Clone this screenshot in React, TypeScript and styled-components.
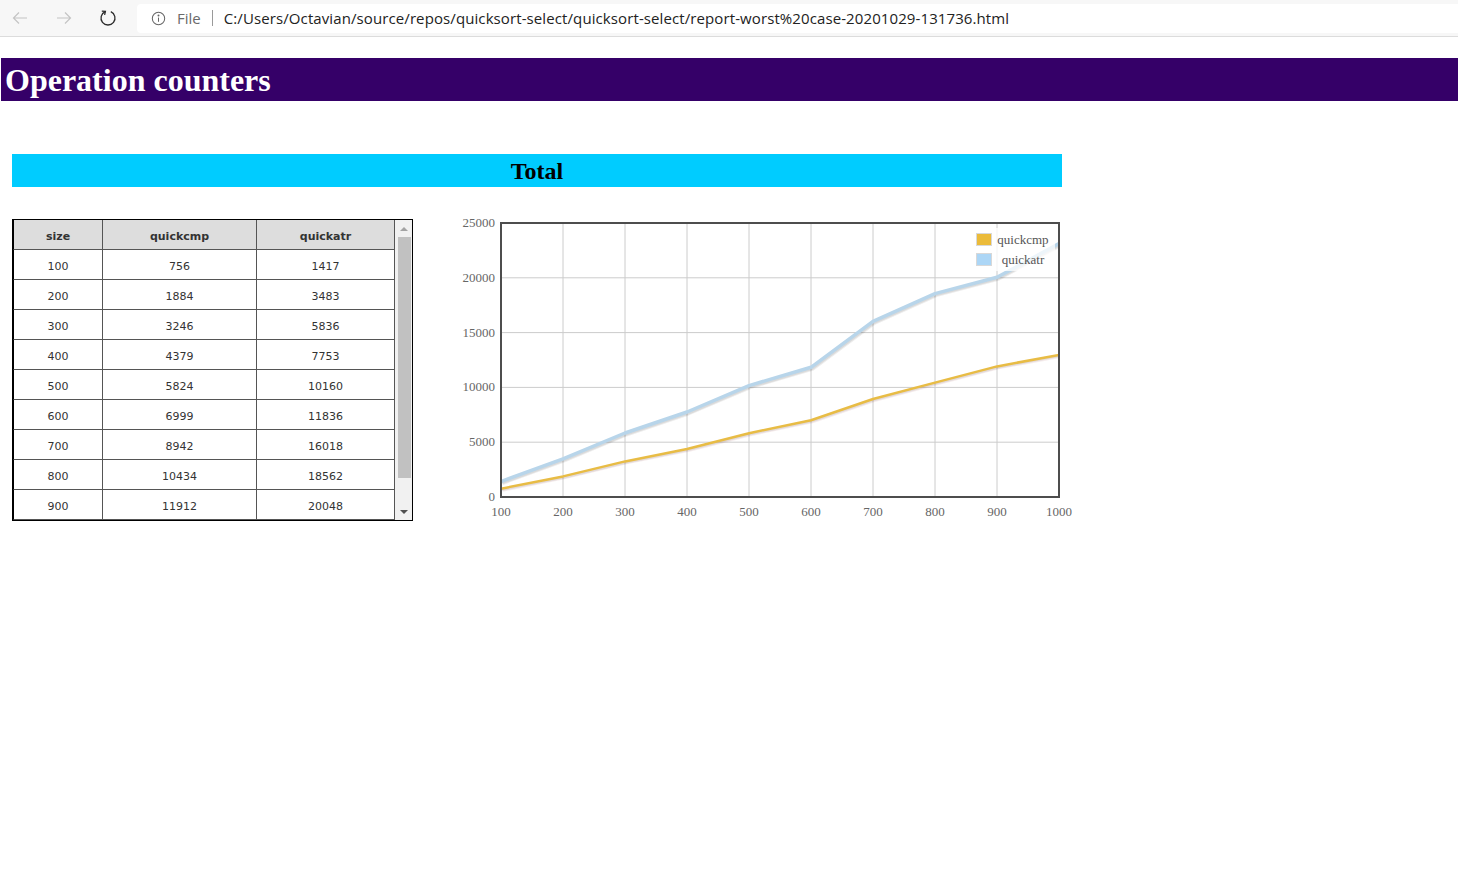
import styled, { createGlobalStyle } from "styled-components";

const GlobalStyle = createGlobalStyle`
    html, body {
        margin: 0;
        padding: 0;
        background: #ffffff;
        font-family: "Liberation Serif", "Times New Roman", serif;
    }
`;

const ROWS = [
    { size: 100, quickcmp: 756, quickatr: 1417 },
    { size: 200, quickcmp: 1884, quickatr: 3483 },
    { size: 300, quickcmp: 3246, quickatr: 5836 },
    { size: 400, quickcmp: 4379, quickatr: 7753 },
    { size: 500, quickcmp: 5824, quickatr: 10160 },
    { size: 600, quickcmp: 6999, quickatr: 11836 },
    { size: 700, quickcmp: 8942, quickatr: 16018 },
    { size: 800, quickcmp: 10434, quickatr: 18562 },
    { size: 900, quickcmp: 11912, quickatr: 20048 },
    { size: 1000, quickcmp: 12968, quickatr: 23121 },
];

// plot area inside the chart svg
const PLOT = { left: 61, right: 619, top: 13, bottom: 287 };
const xPix = (v: number) => PLOT.left + ((v - 100) / 900) * (PLOT.right - PLOT.left);
const yPix = (v: number) => PLOT.bottom - (v / 25000) * (PLOT.bottom - PLOT.top);

function BrowserBar() {
    return (
        <Toolbar>
            <NavButton $dim>
                <svg width="18" height="18" viewBox="0 0 18 18" fill="none" stroke="currentColor" strokeWidth="1.2">
                    <path d="M16 9H2.5M8 3.5L2.5 9L8 14.5" />
                </svg>
            </NavButton>
            <NavButton $dim>
                <svg width="18" height="18" viewBox="0 0 18 18" fill="none" stroke="currentColor" strokeWidth="1.2">
                    <path d="M2 9h13.5M10 3.5L15.5 9L10 14.5" />
                </svg>
            </NavButton>
            <NavButton>
                <svg width="18" height="18" viewBox="0 0 18 18" fill="none" stroke="currentColor" strokeWidth="1.3">
                    <path d="M6.2 2.6A7 7 0 1 0 11.8 2.6" />
                    <path d="M2.8 2.2L6.4 2.4L5.6 5.8" />
                </svg>
            </NavButton>
            <AddressBox>
                <svg width="15" height="15" viewBox="0 0 16 16" fill="none" stroke="#666" strokeWidth="1.1">
                    <circle cx="8" cy="8" r="6.6" />
                    <path d="M8 7v4.5" />
                    <circle cx="8" cy="4.8" r="0.5" fill="#666" />
                </svg>
                <SchemeLabel>File</SchemeLabel>
                <Divider />
                <UrlText>C:/Users/Octavian/source/repos/quicksort-select/quicksort-select/report-worst%20case-20201029-131736.html</UrlText>
            </AddressBox>
        </Toolbar>
    );
}

function CounterTable() {
    return (
        <TableFrame>
            <TableViewport>
                <Grid>
                    <colgroup>
                        <col style={{ width: 90 }} />
                        <col style={{ width: 154 }} />
                        <col style={{ width: 138 }} />
                    </colgroup>
                    <thead>
                        <tr>
                            <HeadCell>size</HeadCell>
                            <HeadCell>quickcmp</HeadCell>
                            <HeadCell>quickatr</HeadCell>
                        </tr>
                    </thead>
                    <tbody>
                        {ROWS.map((r) => (
                            <tr key={r.size}>
                                <Cell>{r.size}</Cell>
                                <Cell>{r.quickcmp}</Cell>
                                <Cell>{r.quickatr}</Cell>
                            </tr>
                        ))}
                    </tbody>
                </Grid>
            </TableViewport>
            <ScrollBar>
                <ScrollArrow $up />
                <ScrollTrack>
                    <ScrollThumb />
                </ScrollTrack>
                <ScrollArrow />
            </ScrollBar>
        </TableFrame>
    );
}

function series(key: "quickcmp" | "quickatr", dx = 0, dy = 0) {
    return ROWS.map((r) => `${(xPix(r.size) + dx).toFixed(1)},${(yPix(r[key]) + dy).toFixed(1)}`).join(" ");
}

function TotalChart() {
    const xTicks = [100, 200, 300, 400, 500, 600, 700, 800, 900, 1000];
    const yTicks = [0, 5000, 10000, 15000, 20000, 25000];

    return (
        <ChartSvg width="640" height="320" viewBox="0 0 640 320">
            <defs>
                <clipPath id="plotClip">
                    <rect x={PLOT.left} y={PLOT.top} width={PLOT.right - PLOT.left} height={PLOT.bottom - PLOT.top} />
                </clipPath>
            </defs>
            {xTicks.map((t) => (
                <line key={"gx" + t} x1={xPix(t)} x2={xPix(t)} y1={PLOT.top} y2={PLOT.bottom} stroke="#cccccc" strokeWidth="1" />
            ))}
            {yTicks.map((t) => (
                <line key={"gy" + t} x1={PLOT.left} x2={PLOT.right} y1={yPix(t)} y2={yPix(t)} stroke="#cccccc" strokeWidth="1" />
            ))}

            <g clipPath="url(#plotClip)" fill="none" strokeLinejoin="round">
                <polyline points={series("quickatr", 1.5, 1.5)} stroke="rgba(0,0,0,0.07)" strokeWidth="4" />
                <polyline points={series("quickatr", 0.8, 0.8)} stroke="rgba(0,0,0,0.08)" strokeWidth="4" />
                <polyline points={series("quickatr")} stroke="#b8d5ea" strokeWidth="3.5" />
                <polyline points={series("quickcmp", 1.5, 1.5)} stroke="rgba(160,60,60,0.09)" strokeWidth="3" />
                <polyline points={series("quickcmp", 0.8, 0.8)} stroke="rgba(0,0,0,0.08)" strokeWidth="3" />
                <polyline points={series("quickcmp")} stroke="#e8bc45" strokeWidth="2.5" />
            </g>

            <rect x={PLOT.left} y={PLOT.top} width={PLOT.right - PLOT.left} height={PLOT.bottom - PLOT.top} fill="none" stroke="#4d4d4d" strokeWidth="2" />

            {yTicks.map((t) => (
                <AxisText key={"ly" + t} x={55} y={yPix(t) + 4} textAnchor="end">{t}</AxisText>
            ))}
            {xTicks.map((t) => (
                <AxisText key={"lx" + t} x={xPix(t)} y={306} textAnchor="middle">{t}</AxisText>
            ))}

            {/* legend */}
            <rect x="529" y="18" width="86" height="43" fill="rgba(255,255,255,0.75)" />
            <rect x="536.5" y="23.5" width="15" height="12" fill="#ebbb3a" stroke="#d8d8d8" />
            <rect x="536.5" y="43.5" width="15" height="12" fill="#acd6f6" stroke="#d8d8d8" />
            <LegendText x="583" y="34" textAnchor="middle">quickcmp</LegendText>
            <LegendText x="583" y="54" textAnchor="middle">quickatr</LegendText>
        </ChartSvg>
    );
}

export default function App() {
    return (
        <>
            <GlobalStyle />
            <BrowserBar />
            <PageTitle>Operation counters</PageTitle>
            <Content>
                <SectionBar>Total</SectionBar>
                <ReportRow>
                    <CounterTable />
                    <TotalChart />
                </ReportRow>
            </Content>
        </>
    );
}

const Toolbar = styled.div`
    display: flex;
    align-items: center;
    height: 36px;
    background: #f7f7f7;
    border-bottom: 1px solid #dcdcdc;
    box-sizing: content-box;
    padding-left: 0;
`;

const NavButton = styled.div<{ $dim?: boolean }>`
    display: flex;
    align-items: center;
    justify-content: center;
    width: 44px;
    height: 32px;
    margin-left: -2px;
    margin-right: 2px;
    color: ${(p) => (p.$dim ? "#c4c4c4" : "#2b2b2b")};
`;

const AddressBox = styled.div`
    flex: 1;
    display: flex;
    align-items: center;
    height: 29px;
    margin-left: 5px;
    padding-left: 14px;
    background: #ffffff;
    border-radius: 4px 0 0 4px;
    font-family: "Open Sans", "Noto Sans", sans-serif;
    font-size: 15px;
`;

const SchemeLabel = styled.span`
    margin-left: 11px;
    color: #6a6a6a;
`;

const Divider = styled.span`
    width: 1px;
    height: 16px;
    margin: 0 11px 0 11px;
    background: #9a9a9a;
`;

const UrlText = styled.span`
    color: #222222;
    letter-spacing: 0.1px;
    white-space: nowrap;
`;

const PageTitle = styled.h1`
    margin: 21px 0 0 1px;
    height: 43px;
    padding-left: 4px;
    background: #350068;
    color: #ffffff;
    font-size: 32px;
    font-weight: bold;
    line-height: 44px;
`;

const Content = styled.div`
    padding: 0 12px;
`;

const SectionBar = styled.div`
    width: 1050px;
    height: 33px;
    margin-top: 53px;
    background: #00ccff;
    color: #000000;
    font-size: 24px;
    font-weight: bold;
    line-height: 34px;
    text-align: center;
`;

const ReportRow = styled.div`
    display: flex;
    align-items: flex-start;
    gap: 27px;
    margin-top: 23px;
`;

const TableFrame = styled.div`
    display: flex;
    margin-top: 9px;
    border: 1px solid #000000;
    background: #ffffff;
`;

const TableViewport = styled.div`
    width: 382px;
    height: 300px;
    overflow: hidden;
`;

const Grid = styled.table`
    width: 382px;
    border-collapse: separate;
    border-spacing: 0;
    table-layout: fixed;
    font-family: "DejaVu Sans", Verdana, sans-serif;
    font-size: 11px;
    color: #333333;
`;

const HeadCell = styled.th`
    box-sizing: border-box;
    height: 30px;
    padding: 3px 0 0;
    background: #dddddd;
    border-right: 1px solid #555555;
    border-bottom: 1px solid #555555;
    font-weight: bold;
    text-align: center;
    &:first-child { border-left: 1px solid #000000; }
`;

const Cell = styled.td`
    box-sizing: border-box;
    height: 30px;
    padding: 3px 0 0;
    border-right: 1px solid #555555;
    border-bottom: 1px solid #555555;
    text-align: center;
    &:first-child { border-left: 1px solid #000000; }
`;

const ScrollBar = styled.div`
    display: flex;
    flex-direction: column;
    width: 17px;
    height: 300px;
    background: #f1f1f1;
`;

const ScrollArrow = styled.div<{ $up?: boolean }>`
    display: flex;
    align-items: center;
    justify-content: center;
    height: 17px;
    &::before {
        content: "";
        width: 0;
        height: 0;
        border-left: 4px solid transparent;
        border-right: 4px solid transparent;
        ${(p) => (p.$up ? "border-bottom: 4px solid #a3a3a3;" : "border-top: 4px solid #505050;")}
    }
`;

const ScrollTrack = styled.div`
    flex: 1;
    padding: 0 1px 0 3px;
`;

const ScrollThumb = styled.div`
    height: 241px;
    background: #c1c1c1;
`;

const ChartSvg = styled.svg`
    display: block;
    overflow: visible;
`;

const AxisText = styled.text`
    font-family: "Liberation Serif", "Times New Roman", serif;
    font-size: 13px;
    fill: #666666;
`;

const LegendText = styled.text`
    font-family: "Liberation Serif", "Times New Roman", serif;
    font-size: 13px;
    fill: #555555;
`;
